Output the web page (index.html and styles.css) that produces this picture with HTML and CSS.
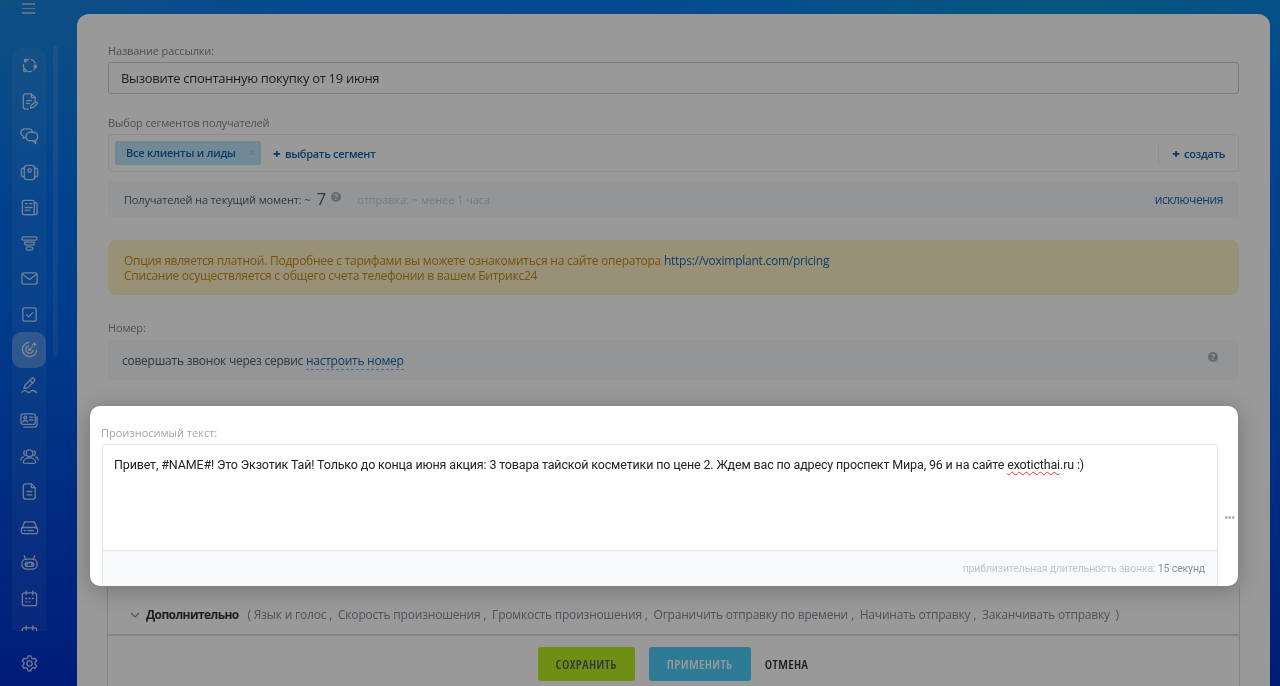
FILE: index.html
```html
<!DOCTYPE html>
<html lang="ru">
<head>
<meta charset="utf-8">
<title>Рассылка</title>
<link rel="stylesheet" href="styles.css">
</head>
<body>
<div class="app">
  <aside class="side">
    <div class="burger"><span></span><span></span><span></span></div>
    <div class="rail">
      <nav class="menu">
        <div class="mi"><svg viewBox="0 0 20 20"><circle cx="10" cy="10" r="6.500" stroke-dasharray="5 3"/><circle cx="6" cy="4.500" r="1.300"/><circle cx="16" cy="11" r="1.300"/><circle cx="5" cy="15" r="1.300"/></svg></div>
        <div class="mi"><svg viewBox="0 0 20 20"><path d="M9 18H6a2.500 2.500 0 0 1-2.500-2.500v-11A2.500 2.500 0 0 1 6 2h6l4 4v4"/><path d="M12 2v4h4M7 9h5M7 12h3"/><path d="M11 17l.5-2.500 5-4.500 2 2-5 4.500z"/></svg></div>
        <div class="mi"><svg viewBox="0 0 20 20"><path d="M13 5a4 4 0 0 0-4-3H5a4 4 0 0 0-1.500 7.700V12l2.500-1.500"/><rect x="6.500" y="5.500" width="12" height="9" rx="4"/><path d="M14 14.500l2.500 3v-3"/></svg></div>
        <div class="mi"><svg viewBox="0 0 20 20"><rect x="4.500" y="2.500" width="11" height="15" rx="3"/><circle cx="10" cy="8" r="1.800"/><path d="M4.500 5.500H3a1.500 1.500 0 0 0-1.500 1.500v6A1.500 1.500 0 0 0 3 14.500h1.500M15.500 5.500H17A1.500 1.500 0 0 1 18.500 7v6a1.500 1.500 0 0 1-1.500 1.500h-1.500"/></svg></div>
        <div class="mi"><svg viewBox="0 0 20 20"><rect x="2.500" y="2.500" width="12.500" height="15" rx="2"/><path d="M15 5h1.500a1.500 1.500 0 0 1 1.500 1.500V16a1.500 1.500 0 0 1-1.500 1.500H5M5.500 6h2M10 6h2.500M5.500 10h7M5.500 13h5"/></svg></div>
        <div class="mi"><svg viewBox="0 0 20 20"><rect x="2" y="3" width="16" height="3.500" rx="1.700"/><path d="M4.500 8.500h11l-1 3h-9z"/><rect x="6.500" y="13.500" width="7" height="3.500" rx="1.700"/></svg></div>
        <div class="mi"><svg viewBox="0 0 20 20"><rect x="2" y="4" width="16" height="12" rx="2"/><path d="M2.500 5.500L10 11l7.500-5.500"/></svg></div>
        <div class="mi"><svg viewBox="0 0 20 20"><rect x="3" y="3" width="14" height="14" rx="2"/><path d="M7 10.500l2.200 2L13.500 8"/></svg></div>
        <div class="mi active"><svg viewBox="0 0 20 20"><path d="M17.500 11A7.500 7.500 0 1 1 9 2.600"/><path d="M13.800 11A3.900 3.900 0 1 1 9 6.200"/><circle cx="10" cy="10" r="1"/><path d="M10 10l3-3"/><path d="M15 1.500l.9 2.100 2.100.9-2.100.9-.9 2.100-.9-2.100-2.100-.9 2.100-.9z" class="fill"/></svg></div>
        <div class="mi"><svg viewBox="0 0 20 20"><path d="M4 13l1-3 7-7a1.800 1.800 0 0 1 3 2.500l-7 7z"/><path d="M10.500 4.500l3 3"/><path d="M2 17c2-2 4-2 5.500-.5s3 1 4-.5 3-1 6 1.500"/></svg></div>
        <div class="mi"><svg viewBox="0 0 20 20"><rect x="1" y="3" width="15" height="11" rx="2"/><path d="M18 6v8a3 3 0 0 1-3 3H4"/><circle cx="5.500" cy="7" r="1.500"/><path d="M3 11.500c.5-2 4.500-2 5 0M10 6.500h3.500M10 9.500h3.500"/></svg></div>
        <div class="mi"><svg viewBox="0 0 20 20"><circle cx="10" cy="6.500" r="3.500"/><path d="M3.500 16.500c0-3 3-5 6.500-5s6.500 2 6.500 5c0 .8-13 .8-13 0z"/><path d="M5.500 9a3 3 0 0 1-.5-5M14.500 9a3 3 0 0 0 .5-5M1 13.500c0-1.500 1-2.500 2.500-3M19 13.500c0-1.500-1-2.500-2.500-3"/></svg></div>
        <div class="mi"><svg viewBox="0 0 20 20"><path d="M6 2h6l4 4v9.500a2.500 2.500 0 0 1-2.500 2.500h-7.500a2.500 2.500 0 0 1-2.500-2.500v-11A2.500 2.500 0 0 1 6 2z"/><path d="M12 2v4h4M7.500 10h5M7.500 13.500h5"/></svg></div>
        <div class="mi"><svg viewBox="0 0 20 20"><path d="M2 11l2.500-6a2 2 0 0 1 2-1h7a2 2 0 0 1 2 1l2.500 6"/><rect x="1.500" y="10" width="17" height="6.500" rx="2"/><path d="M4.500 13.200h1.500M8 13.200h6"/></svg></div>
        <div class="mi"><svg viewBox="0 0 20 20"><rect x="2" y="6.500" width="16" height="10.500" rx="5"/><path d="M6 6.800L4.500 3M14 6.800L15.500 3"/><rect x="5.500" y="10" width="9" height="4" rx="2"/><circle cx="7.500" cy="12" r=".5"/><circle cx="12.500" cy="12" r=".5"/></svg></div>
        <div class="mi"><svg viewBox="0 0 20 20"><rect x="2.500" y="4" width="15" height="13.500" rx="2"/><path d="M6.500 2v4M13.500 2v4M6 10h1M9.500 10h1M13 10h1M6 13.500h1M9.500 13.500h1"/></svg></div>
        <div class="mi"><svg viewBox="0 0 20 20"><rect x="2.500" y="4" width="15" height="13.500" rx="2"/><path d="M6.500 2v4M13.500 2v4M6 10h1M9.500 10h1M13 10h1"/></svg></div>
      </nav>
      <div class="thumb"></div>
    </div>
    <div class="gear"><svg viewBox="0 0 20 20"><circle cx="10" cy="10" r="2.800"/><path d="M8.500 2h3l.6 2.300 1.600.9 2.300-.6 1.500 2.600-1.700 1.700v1.800l1.700 1.700-1.500 2.600-2.300-.6-1.600.9-.6 2.300h-3l-.6-2.300-1.600-.9-2.300.6-1.500-2.600 1.700-1.700V8.900L2.500 7.200 4 4.600l2.300.6 1.600-.9z"/></svg></div>
  </aside>

  <main class="panel">
    <div class="lbl">Название рассылки:</div>
    <div class="name-input">Вызовите спонтанную покупку от 19 июня</div>
    <div class="lbl seg-lbl">Выбор сегментов получателей</div>
    <div class="seg-box">
      <span class="chip">Все клиенты и лиды <i>×</i></span>
      <span class="add"><b>+</b> выбрать сегмент</span>
      <span class="create"><b>+</b> создать</span>
    </div>
    <div class="count-row">
      <span class="count-text">Получателей на текущий момент: ~</span>
      <span class="num">7</span>
      <span class="q">?</span>
      <span class="eta">отправка: ~ менее 1 часа</span>
      <span class="excl">исключения</span>
    </div>
    <div class="alert">
      <div>Опция является платной. Подробнее с тарифами вы можете ознакомиться на сайте оператора <span class="alert-link">https://voximplant.com/pricing</span></div>
      <div>Списание осуществляется с общего счета телефонии в вашем Битрикс24</div>
    </div>
    <div class="lbl num-lbl">Номер:</div>
    <div class="num-box">
      <span>совершать звонок через сервис <span class="dash">настроить номер</span></span>
      <span class="q">?</span>
    </div>
    <div class="more">
      <svg class="chev" viewBox="0 0 10 6"><path d="M1 1l4 4 4-4"/></svg>
      <b>Дополнительно</b>
      <span>( Язык и голос ,&nbsp; Скорость произношения ,&nbsp; Громкость произношения ,&nbsp; Ограничить отправку по времени ,&nbsp; Начинать отправку ,&nbsp; Заканчивать отправку &nbsp;)</span>
    </div>
    <div class="actions">
      <span class="btn save">СОХРАНИТЬ</span>
      <span class="btn apply">ПРИМЕНИТЬ</span>
      <span class="cancel">ОТМЕНА</span>
    </div>
  </main>
</div>

<div class="dim"></div>

<section class="spot">
  <div class="spot-lbl">Произносимый текст:</div>
  <div class="editor">
    <div class="editor-text">Привет, #NAME#! Это Экзотик Тай! Только до конца июня акция: 3 товара тайской косметики по цене 2. Ждем вас по адресу проспект Мира, 96 и на сайте <span class="typo">exoticthai</span>.ru :)</div>
    <div class="editor-foot">приблизительная длительность звонка: <em>15 секунд</em></div>
  </div>
  <div class="dots">•••</div>
</section>
</body>
</html>
```

FILE: styles.css
```css
* { box-sizing: border-box; }
html, body { margin: 0; height: 686px; overflow: hidden; }
body {
  font-family: "Open Sans", "Liberation Sans", sans-serif;
  color: #333;
  background:
    radial-gradient(420px 110px at 1060px 0, rgba(0, 170, 170, .45), rgba(0, 170, 170, 0)),
    radial-gradient(300px 200px at 0 0, rgba(40, 140, 190, .5), rgba(40, 140, 190, 0)),
    linear-gradient(180deg, #0a7cf2 0, #0066e6 45%, #0030c8 100%);
}
.app { display: flex; height: 686px; filter: blur(.45px); }

/* sidebar */
.side { width: 77px; flex: none; display: flex; flex-direction: column; padding-left: 12px; }
.burger { width: 13px; margin: 3px 0 0 10px; display: flex; flex-direction: column; gap: 3px; height: 30px; opacity: .65; }
.burger span { height: 1.500px; background: #d6dbe6; }
.rail { display: flex; gap: 7px; height: 598px; padding-top: 15px; }
.menu { width: 34px; height: 583px; overflow: hidden; background: rgba(255, 255, 255, .06); border-radius: 10px 10px 0 0; display: flex; flex-direction: column; }
.mi { flex: none; height: 35.500px; display: flex; align-items: center; justify-content: center; border-radius: 10px; }
.mi svg, .gear svg { width: 19px; height: 19px; fill: none; stroke: #fff; stroke-width: 1.400; stroke-linecap: round; stroke-linejoin: round; opacity: .72; }
.mi svg .fill { fill: #fff; stroke: none; }
.active { background: rgba(255, 255, 255, .28); }
.thumb { width: 5px; height: 311px; margin-top: -2px; background: rgba(255, 255, 255, .1); border-radius: 3px; }
.gear { width: 34px; height: 32px; display: flex; align-items: center; justify-content: center; margin-top: 16px; }

/* panel */
.panel { width: 1193px; height: 680px; margin-top: 14px; background: #fff; border-radius: 12px 12px 0 0; padding: 29px 31px 0; font-size: 11px; }
.lbl { color: #80868e; line-height: 15px; height: 15px; margin-bottom: 4px; letter-spacing: -.15px; }
.name-input { height: 32px; border: 1px solid #c6cdd3; border-radius: 3px; font-size: 13px; line-height: 30px; padding-left: 12px; color: #333; letter-spacing: -.3px; }
.seg-lbl { margin-top: 21px; }
.seg-box { height: 38px; border: 1px solid #e9edf0; border-radius: 4px; display: flex; align-items: center; padding-left: 6px; font-weight: 600; }
.chip { background: #bde4f7; color: #0d62ab; height: 24px; line-height: 24px; width: 146px; padding-left: 11px; border-radius: 2px; position: relative; font-size: 11px; white-space: nowrap; letter-spacing: -.2px; }
.chip i { position: absolute; right: 6px; top: 0; font-style: normal; color: #9ccde6; font-size: 12px; }
.add { margin-left: 12px; color: #0d62ab; letter-spacing: -.3px; }
.add b, .create b { font-weight: 800; font-size: 13px; margin-right: 2px; }
.create { margin-left: auto; border-left: 1px solid #e9edf0; padding: 2px 13px 2px 13px; color: #0d62ab; line-height: 16px; letter-spacing: -.35px; }
.count-row { height: 36px; margin-top: 9px; background: #f7f9fb; border-radius: 4px; display: flex; align-items: center; padding: 0 16px; color: #525c69; }
.count-text { letter-spacing: -.15px; }
.num { font-size: 17px; margin-left: 6px; line-height: 20px; }
.q { width: 10px; height: 10px; border-radius: 50%; background: #aab0b8; color: #fff; font-size: 8px; line-height: 10px; text-align: center; font-weight: 700; flex: none; }
.count-row .q { margin: -5px 0 0 5px; }
.eta { margin-left: 16px; color: #c8ccd1; letter-spacing: -.05px; }
.excl { margin-left: auto; font-size: 12px; color: #1768ae; letter-spacing: -.4px; }
.alert { margin-top: 23px; height: 55px; border-radius: 8px; background: #fff0c9; padding: 13px 16px 0; font-size: 12px; line-height: 15px; color: #c78a14; letter-spacing: -.25px; }
.alert-link { color: #1768ae; }
.num-lbl { margin-top: 25px; margin-bottom: 5px; }
.num-box { height: 40px; background: #f5f8fa; border-radius: 4px; display: flex; align-items: center; justify-content: space-between; padding: 0 21px 0 14px; font-size: 12px; color: #525c69; letter-spacing: -.25px; }
.dash { color: #1768ae; border-bottom: 1px dashed #8fb6d8; }
.num-box .q { margin-top: -6px; }
.more { margin: 207px -1px 0; height: 48px; border: 1px solid #d5dade; border-top: 0; display: flex; align-items: center; padding: 8px 0 0 22px; font-size: 12px; color: #828b95; white-space: nowrap; }
.more b { color: #333; margin-left: 6px; margin-right: 9px; letter-spacing: -.6px; }
.more span { letter-spacing: -.2px; }
.chev { width: 10px; height: 6px; fill: none; stroke: #828b95; stroke-width: 1.200; }
.actions { margin: 0 -1px; height: 52px; border: 1px solid #d5dade; border-bottom: 0; display: flex; justify-content: center; padding-top: 11px; padding-right: 1px; align-items: flex-start; font-size: 13px; font-weight: 600; font-stretch: 75%; letter-spacing: .4px; }
.btn { height: 34px; line-height: 34px; text-align: center; border-radius: 3px; }
.save { width: 97px; background: #bbed21; color: #535c69; }
.apply { width: 102px; margin-left: 14px; background: #3bc8f5; color: #fff; opacity: .92; }
.cancel { margin-left: 14px; line-height: 34px; color: #333; }

/* overlay and spotlight */
.dim { position: fixed; inset: 0; background: rgba(0, 0, 0, .4); }
.spot { position: absolute; left: 90px; top: 406px; width: 1148px; height: 180px; background: #fff; border-radius: 10px; padding: 19px 20px 0 12px; overflow: hidden; box-shadow: 0 4px 22px rgba(0, 0, 0, .25); }
.spot-lbl { font-size: 11px; line-height: 15px; color: #a0a6ad; height: 19px; margin-left: -1px; }
.editor { height: 143px; border: 1px solid #dfe5ea; border-radius: 3px 3px 0 0; display: flex; flex-direction: column; }
.editor-text { flex: 1; padding: 11px 11px 0; font-family: Roboto, "Open Sans", sans-serif; font-size: 12.500px; line-height: 18px; letter-spacing: -.15px; color: #222; white-space: nowrap; }
.typo { text-decoration: underline wavy #e53935 1px; text-underline-offset: 2px; }
.editor-foot { height: 36px; background: #f8f9fb; border-top: 1px solid #dfe5ea; text-align: right; padding-right: 12px; font-family: Roboto, "Open Sans", sans-serif; font-size: 10.500px; letter-spacing: -.15px; line-height: 36px; color: #c0c5ca; }
.editor-foot em { font-style: normal; color: #8b9199; }
.dots { position: absolute; right: 0; top: 105px; width: 14px; color: #a9aeb4; font-size: 12px; line-height: 14px; letter-spacing: -1px; white-space: nowrap; }
```
